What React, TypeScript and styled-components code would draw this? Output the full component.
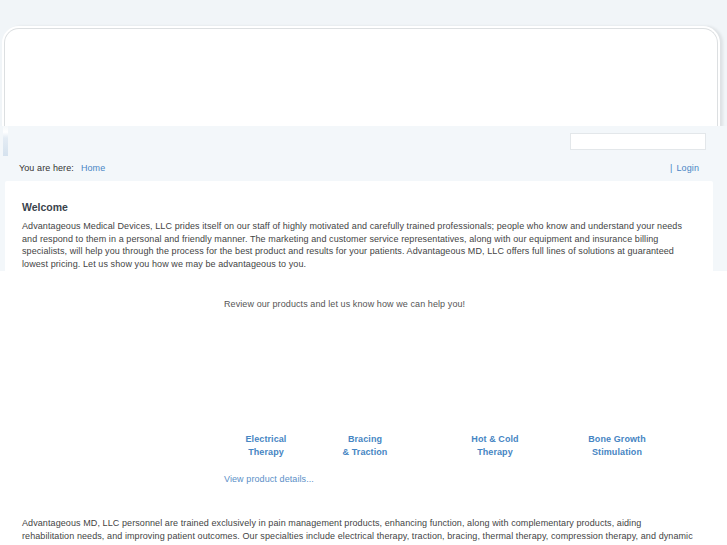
import React from "react";
import styled, {createGlobalStyle} from "styled-components";

const GlobalStyle = createGlobalStyle`
    html, body {
        margin: 0;
        padding: 0;
        background: #ffffff;
    }
    body {
        font-family: "Liberation Sans", Arial, sans-serif;
        font-size: 9px;
        letter-spacing: 0.09px;
        color: #444;
        overflow: hidden;
    }
`;

const products = [
    {label: ["Electrical", "Therapy"], width: 84},
    {label: ["Bracing", "& Traction"], width: 114},
    {label: ["Hot & Cold", "Therapy"], width: 146},
    {label: ["Bone Growth", "Stimulation"], width: 98},
];

const App = () => {
    return <>
        <GlobalStyle/>
        <Page>
            <Top>
                <HeaderBox/>
            </Top>
            <Shell>
                <NavBar>
                    <NavStub/>
                    <Search type="text"/>
                </NavBar>
                <Breadcrumb>
                    <Crumbs>
                        <span>You are here:</span>
                        <Link>Home</Link>
                    </Crumbs>
                    <UserLinks>
                        <Pipe>|</Pipe>
                        <Link>Login</Link>
                    </UserLinks>
                </Breadcrumb>
                <ContentBox>
                    <Title>Welcome</Title>
                    <Text>
                        Advantageous Medical Devices, LLC prides itself on our staff of highly motivated and carefully trained professionals; people who know and understand your needs<br/>
                        and respond to them in a personal and friendly manner. The marketing and customer service representatives, along with our equipment and insurance billing<br/>
                        specialists, will help you through the process for the best product and results for your patients. Advantageous MD, LLC offers full lines of solutions at guaranteed<br/>
                        lowest pricing. Let us show you how we may be advantageous to you.
                    </Text>
                </ContentBox>
            </Shell>
            <Products>
                <Intro>Review our products and let us know how we can help you!</Intro>
                <ProductRow>
                    {products.map(p => <ProductCell key={p.label[0]} $width={p.width}>
                        <ProductImage/>
                        <ProductLabel>{p.label[0]}<br/>{p.label[1]}</ProductLabel>
                    </ProductCell>)}
                </ProductRow>
                <Details>View product details...</Details>
            </Products>
            <Footer>
                Advantageous MD, LLC personnel are trained exclusively in pain management products, enhancing function, along with complementary products, aiding<br/>
                rehabilitation needs, and improving patient outcomes. Our specialties include electrical therapy, traction, bracing, thermal therapy, compression therapy, and dynamic<br/>
                splinting.
            </Footer>
        </Page>
    </>
};

export default App;

const Page = styled.div`
    width: 727px;
    height: 545px;
    overflow: hidden;
    background: #ffffff;
`;

const Top = styled.div`
    background: #f1f5f8;
    padding: 28px 9px 0 4px;
`;

const HeaderBox = styled.div`
    height: 97px;
    background: #ffffff;
    border: 1px solid #dcdfe1;
    border-bottom: none;
    border-radius: 15px 15px 0 0;
    box-shadow: 0 0 0 2px #ffffff, 3px 0 3px 2px rgba(0, 0, 0, 0.08);
`;

const Shell = styled.div`
    background: #f3f7fa;
`;

const NavBar = styled.div`
    height: 30px;
    display: flex;
    align-items: flex-start;
    justify-content: space-between;
    padding: 0 21px 0 3px;
`;

const NavStub = styled.div`
    width: 5px;
    height: 30px;
    background: linear-gradient(to bottom, #f6f9fb 0%, #ffffff 20%, #e4ecf4 40%, #d5e2ee 100%);
`;

const Search = styled.input`
    margin-top: 7px;
    width: 136px;
    height: 17px;
    box-sizing: border-box;
    border: 1px solid #e3e7ea;
    background: #ffffff;
    padding: 0;
    outline: none;
`;

const Breadcrumb = styled.div`
    height: 25px;
    line-height: 25px;
    display: flex;
    justify-content: space-between;
    padding: 0 28px 0 19px;
    color: #333;
`;

const Crumbs = styled.div`
    display: flex;
    gap: 7px;
`;

const UserLinks = styled.div`
    display: flex;
    gap: 4px;
`;

const Pipe = styled.span`
    color: #4a86c5;
`;

const Link = styled.span`
    color: #4a86c5;
    cursor: pointer;
`;

const ContentBox = styled.div`
    margin: 0 14px 0 5px;
    background: #ffffff;
    padding: 19px 17px 0 17px;
    height: 71px;
    border-radius: 2px 2px 0 0;
`;

const Title = styled.h2`
    margin: 0 0 6px 0;
    font-size: 10.5px;
    line-height: 14px;
    font-weight: bold;
    letter-spacing: 0;
    color: #3a434c;
`;

const Text = styled.p`
    margin: 0;
    line-height: 12.7px;
    color: #444;
    white-space: nowrap;
`;

const Products = styled.div`
    padding: 27px 0 0 224px;
`;

const Intro = styled.p`
    margin: 0;
    line-height: 13px;
    color: #555;
`;

const ProductRow = styled.div`
    display: flex;
`;

const ProductCell = styled.div<{ $width: number }>`
    width: ${p => p.$width}px;
    display: flex;
    flex-direction: column;
    align-items: center;
`;

const ProductImage = styled.div`
    height: 122px;
`;

const ProductLabel = styled.div`
    font-weight: bold;
    color: #4685c3;
    line-height: 13px;
    text-align: center;
    white-space: nowrap;
`;

const Details = styled.div`
    margin-top: 14px;
    line-height: 13px;
    color: #5b8fc7;
`;

const Footer = styled.p`
    margin: 31px 0 0 22px;
    line-height: 13px;
    color: #444;
    white-space: nowrap;
`;
